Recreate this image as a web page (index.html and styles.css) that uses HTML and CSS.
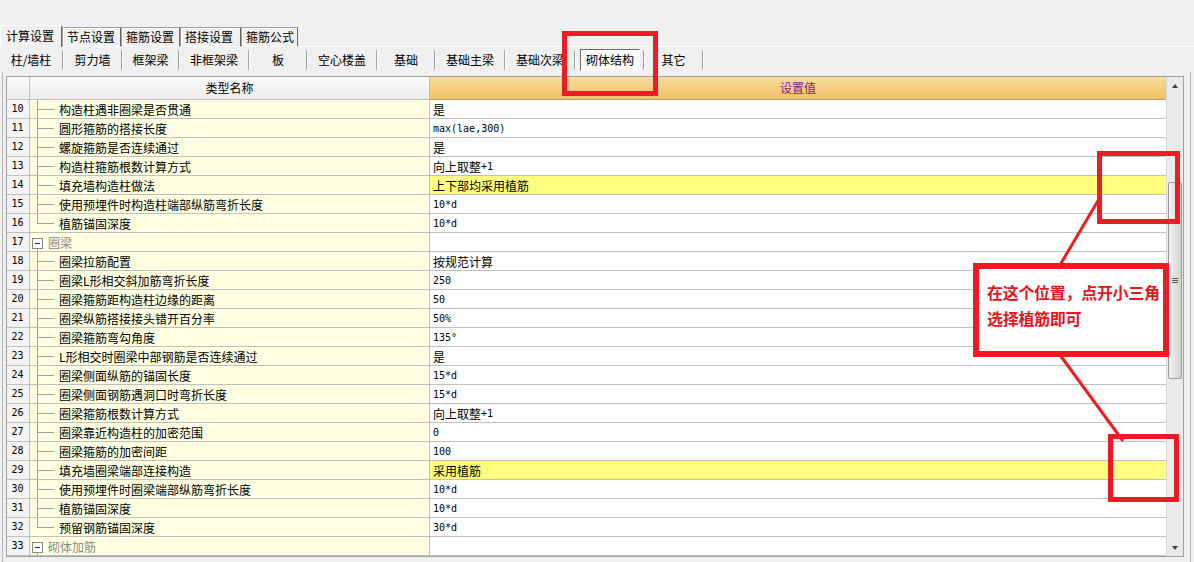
FILE: index.html
```html
<!DOCTYPE html>
<html lang="zh-CN">
<head>
<meta charset="utf-8">
<title>计算设置</title>
<link rel="stylesheet" href="styles.css">
</head>
<body>
<div class="app">
  <div class="tabs1">
    <div class="t1 sel">计算设置</div>
    <div class="t1">节点设置</div>
    <div class="t1 w2">箍筋设置</div>
    <div class="t1 w3">搭接设置</div>
    <div class="t1 w4">箍筋公式</div>
    <div class="t1fill"></div>
  </div>
  <div class="tabs2">
    <div class="t2 a1">柱/墙柱</div><div class="sep"></div>
    <div class="t2 a2">剪力墙</div><div class="sep"></div>
    <div class="t2 a3">框架梁</div><div class="sep"></div>
    <div class="t2 a4">非框架梁</div><div class="sep"></div>
    <div class="t2 a5">板</div><div class="sep"></div>
    <div class="t2 a4">空心楼盖</div><div class="sep"></div>
    <div class="t2 a5">基础</div><div class="sep"></div>
    <div class="t2 a4">基础主梁</div><div class="sep"></div>
    <div class="t2 a4">基础次梁</div><div class="sep"></div>
    <div class="t2 a6"><span class="pressed">砌体结构</span></div><div class="sep"></div>
    <div class="t2 a7">其它</div><div class="sep"></div>
  </div>
  <div class="panel">
    <div class="grid">
      <div class="table">
        <div class="hn"></div><div class="hname">类型名称</div><div class="hval">设置值</div>

        <div class="n">10</div><div class="nm"><span class="tr"></span><span>构造柱遇非圈梁是否贯通</span></div><div class="v">是</div>
        <div class="n">11</div><div class="nm"><span class="tr"></span><span>圆形箍筋的搭接长度</span></div><div class="v"><span class="m">max(lae,300)</span></div>
        <div class="n">12</div><div class="nm"><span class="tr"></span><span>螺旋箍筋是否连续通过</span></div><div class="v">是</div>
        <div class="n">13</div><div class="nm"><span class="tr"></span><span>构造柱箍筋根数计算方式</span></div><div class="v">向上取整<span class="m">+1</span></div>
        <div class="n">14</div><div class="nm"><span class="tr"></span><span>填充墙构造柱做法</span></div><div class="v hl">上下部均采用植筋</div>
        <div class="n">15</div><div class="nm"><span class="tr"></span><span>使用预埋件时构造柱端部纵筋弯折长度</span></div><div class="v"><span class="m">10*d</span></div>
        <div class="n">16</div><div class="nm"><span class="tr last"></span><span>植筋锚固深度</span></div><div class="v"><span class="m">10*d</span></div>
        <div class="n">17</div><div class="nm"><span class="tg"><span class="box"></span></span><span class="gt">圈梁</span></div><div class="v"></div>
        <div class="n">18</div><div class="nm"><span class="tr"></span><span>圈梁拉筋配置</span></div><div class="v">按规范计算</div>
        <div class="n">19</div><div class="nm"><span class="tr"></span><span>圈梁L形相交斜加筋弯折长度</span></div><div class="v"><span class="m">250</span></div>
        <div class="n">20</div><div class="nm"><span class="tr"></span><span>圈梁箍筋距构造柱边缘的距离</span></div><div class="v"><span class="m">50</span></div>
        <div class="n">21</div><div class="nm"><span class="tr"></span><span>圈梁纵筋搭接接头错开百分率</span></div><div class="v"><span class="m">50%</span></div>
        <div class="n">22</div><div class="nm"><span class="tr"></span><span>圈梁箍筋弯勾角度</span></div><div class="v"><span class="m">135°</span></div>
        <div class="n">23</div><div class="nm"><span class="tr"></span><span>L形相交时圈梁中部钢筋是否连续通过</span></div><div class="v">是</div>
        <div class="n">24</div><div class="nm"><span class="tr"></span><span>圈梁侧面纵筋的锚固长度</span></div><div class="v"><span class="m">15*d</span></div>
        <div class="n">25</div><div class="nm"><span class="tr"></span><span>圈梁侧面钢筋遇洞口时弯折长度</span></div><div class="v"><span class="m">15*d</span></div>
        <div class="n">26</div><div class="nm"><span class="tr"></span><span>圈梁箍筋根数计算方式</span></div><div class="v">向上取整<span class="m">+1</span></div>
        <div class="n">27</div><div class="nm"><span class="tr"></span><span>圈梁靠近构造柱的加密范围</span></div><div class="v"><span class="m">0</span></div>
        <div class="n">28</div><div class="nm"><span class="tr"></span><span>圈梁箍筋的加密间距</span></div><div class="v"><span class="m">100</span></div>
        <div class="n">29</div><div class="nm"><span class="tr"></span><span>填充墙圈梁端部连接构造</span></div><div class="v hl">采用植筋</div>
        <div class="n">30</div><div class="nm"><span class="tr"></span><span>使用预埋件时圈梁端部纵筋弯折长度</span></div><div class="v"><span class="m">10*d</span></div>
        <div class="n">31</div><div class="nm"><span class="tr"></span><span>植筋锚固深度</span></div><div class="v"><span class="m">10*d</span></div>
        <div class="n">32</div><div class="nm"><span class="tr last"></span><span>预留钢筋锚固深度</span></div><div class="v"><span class="m">30*d</span></div>
        <div class="n">33</div><div class="nm"><span class="tg"><span class="box"></span></span><span class="gt">砌体加筋</span></div><div class="v"></div>
      </div>
      <div class="vscroll">
        <div class="sbtn"><span class="up"></span></div>
        <div class="track"><div class="thumb"><span class="grip"></span></div></div>
        <div class="sbtn"><span class="down"></span></div>
      </div>
    </div>
  </div>

  <svg class="annot" width="1194" height="562" viewBox="0 0 1194 562">
    <g fill="none" stroke="#ed1c24">
      <rect x="564.5" y="33.5" width="91" height="60" stroke-width="5"/>
      <rect x="1099.5" y="153.5" width="78" height="68" stroke-width="5"/>
      <rect x="1110.5" y="436.5" width="66" height="63" stroke-width="5"/>
      <line x1="1099" y1="199" x2="1060" y2="265" stroke-width="3"/>
      <line x1="1060" y1="355" x2="1123" y2="441" stroke-width="3"/>
    </g>
  </svg>
  <div class="callout">
    <div>在这个位置，点开小三角</div>
    <div>选择植筋即可</div>
  </div>
</div>
</body>
</html>
```
FILE: styles.css
```css
* { box-sizing: border-box; margin: 0; padding: 0; }
body {
  margin: 0;
  background: #f0f0f0;
  font-family: "Noto Sans CJK SC", "Noto Sans", sans-serif;
  font-size: 12px;
  color: #000;
}
.app {
  position: relative;
  width: 1194px;
  height: 562px;
  overflow: hidden;
}

/* first tab row */
.tabs1 {
  display: flex;
  align-items: flex-end;
  height: 47px;
  padding-top: 25px;
}
.t1 {
  height: 20px;
  width: 59px;
  padding-left: 4px;
  line-height: 18px;
  border: 1px solid #a0a0a0;
  border-right-color: #696969;
  border-bottom: 1px solid #fff;
  box-shadow: inset 1px 1px 0 #fff;
  background: #f0f0f0;
  white-space: nowrap;
}
.t1.w2 { width: 59px; }
.t1.w3 { width: 61px; }
.t1.w4 { width: 57px; }
.t1.sel {
  height: 22px;
  width: 62px;
  padding-left: 5px;
  line-height: 20px;
  border-color: #fff;
  border-right-color: #696969;
  border-bottom: none;
  box-shadow: none;
}
.t1fill {
  flex: 1;
  border-bottom: 1px solid #fff;
}

/* second tab row */
.tabs2 {
  display: flex;
  align-items: center;
  height: 25px;
}
.t2 {
  height: 22px;
  line-height: 22px;
  text-align: center;
  white-space: nowrap;
}
.t2.a1 { width: 62px; }
.t2.a2 { width: 57px; }
.t2.a3 { width: 55px; }
.t2.a4 { width: 68px; }
.t2.a5 { width: 56px; }
.t2.a6 { width: 67px; text-align: left; padding-left: 4px; }
.t2.a7 { width: 57px; }
.sep {
  width: 2px;
  height: 20px;
  border-left: 1px solid #a0a0a0;
  border-right: 1px solid #fff;
}
.pressed {
  display: block;
  width: 60px;
  height: 22px;
  line-height: 20px;
  text-align: center;
  border: 1px solid;
  border-color: #696969 #fff #fff #696969;
  background: #fafafa;
}

/* grid panel */
.panel {
  margin-left: 2px;
  width: 1189px;
  padding: 4px 6px 0 3px;
  border-left: 1px solid #b4b4b4;
  border-right: 1px solid #b4b4b4;
  height: 490px;
}
.grid {
  display: flex;
  width: 1178px;
  border: 1px solid #a0a0a0;
  background: #fff;
}
.table {
  display: grid;
  grid-template-columns: 23px 400px 736px;
  grid-template-rows: 23px;
  grid-auto-rows: 19px;
  width: 1159px;
}
.hn, .hname {
  background: linear-gradient(#fbfbfb, #ececec);
  border-bottom: 1px solid #c0c0c0;
  border-right: 1px solid #c0c0c0;
}
.hname {
  text-align: center;
  line-height: 22px;
}
.hval {
  background: linear-gradient(#f9dc9e, #f0c062);
  border-bottom: 1px solid #c8a050;
  text-align: center;
  line-height: 22px;
  color: #7a1f8c;
}
.n {
  background: #f4f4f4;
  border-bottom: 1px solid #c0c0c0;
  border-right: 1px solid #c0c0c0;
  font-family: "DejaVu Sans Mono", "Liberation Mono", monospace;
  font-size: 10px;
  line-height: 18px;
  text-align: center;
  padding-right: 1px;
}
.nm {
  display: flex;
  align-items: center;
  background: #ffffe1;
  border-bottom: 1px solid #c0c0c0;
  border-right: 1px solid #c0c0c0;
  white-space: nowrap;
}
.tr {
  align-self: stretch;
  flex: none;
  width: 29px;
  background:
    linear-gradient(#a0a0a0, #a0a0a0) 7px 0 / 1px 100% no-repeat,
    linear-gradient(#a0a0a0, #a0a0a0) 8px 9px / 16px 1px no-repeat;
}
.tr.last {
  background:
    linear-gradient(#a0a0a0, #a0a0a0) 7px 0 / 1px 10px no-repeat,
    linear-gradient(#a0a0a0, #a0a0a0) 8px 9px / 16px 1px no-repeat;
}
.tg {
  align-self: stretch;
  flex: none;
  width: 18px;
  padding: 5px 0 0 2px;
  background: linear-gradient(#a0a0a0, #a0a0a0) 7px 16px / 1px 3px no-repeat;
}
.box {
  display: block;
  width: 11px;
  height: 11px;
  border: 1px solid #8a8a8a;
  background: #fff linear-gradient(#303030, #303030) center / 5px 1px no-repeat;
}
.gt {
  color: #8a8a8a;
}
.v {
  display: flex;
  align-items: center;
  padding-left: 3px;
  border-bottom: 1px solid #c0c0c0;
  background: #fff;
  white-space: nowrap;
}
.v.hl { background: #ffff80; }
.m {
  font-family: "DejaVu Sans Mono", "Liberation Mono", monospace;
  font-size: 10px;
}

/* scrollbar */
.vscroll {
  width: 17px;
  display: flex;
  flex-direction: column;
  background: #ebebeb;
  border-left: 1px solid #d8d8d8;
}
.sbtn {
  height: 17px;
  display: flex;
  align-items: center;
  justify-content: center;
}
.up {
  width: 0; height: 0;
  border-left: 3px solid transparent;
  border-right: 3px solid transparent;
  border-bottom: 4px solid #404040;
}
.down {
  width: 0; height: 0;
  border-left: 3px solid transparent;
  border-right: 3px solid transparent;
  border-top: 4px solid #404040;
}
.track {
  flex: 1;
  padding: 88px 1px 0 1px;
}
.thumb {
  height: 197px;
  border: 1px solid #9a9a9a;
  border-radius: 2px;
  background: linear-gradient(90deg, #f4f4f4, #e2e2e2 50%, #cfcfcf);
  display: flex;
  align-items: center;
  justify-content: center;
}
.grip {
  width: 6px;
  height: 5px;
  background: repeating-linear-gradient(#555 0 1px, transparent 1px 2px);
}

/* annotations */
.annot {
  position: absolute;
  left: 0;
  top: 0;
  pointer-events: none;
}
.callout {
  position: absolute;
  left: 973px;
  top: 263px;
  width: 196px;
  height: 94px;
  border: 6px solid #ed1c24;
  background: #fff;
  padding: 10px 0 0 8px;
  color: #e8141c;
  font-weight: bold;
  font-size: 16px;
  line-height: 26px;
  letter-spacing: -0.3px;
  white-space: nowrap;
}
```
